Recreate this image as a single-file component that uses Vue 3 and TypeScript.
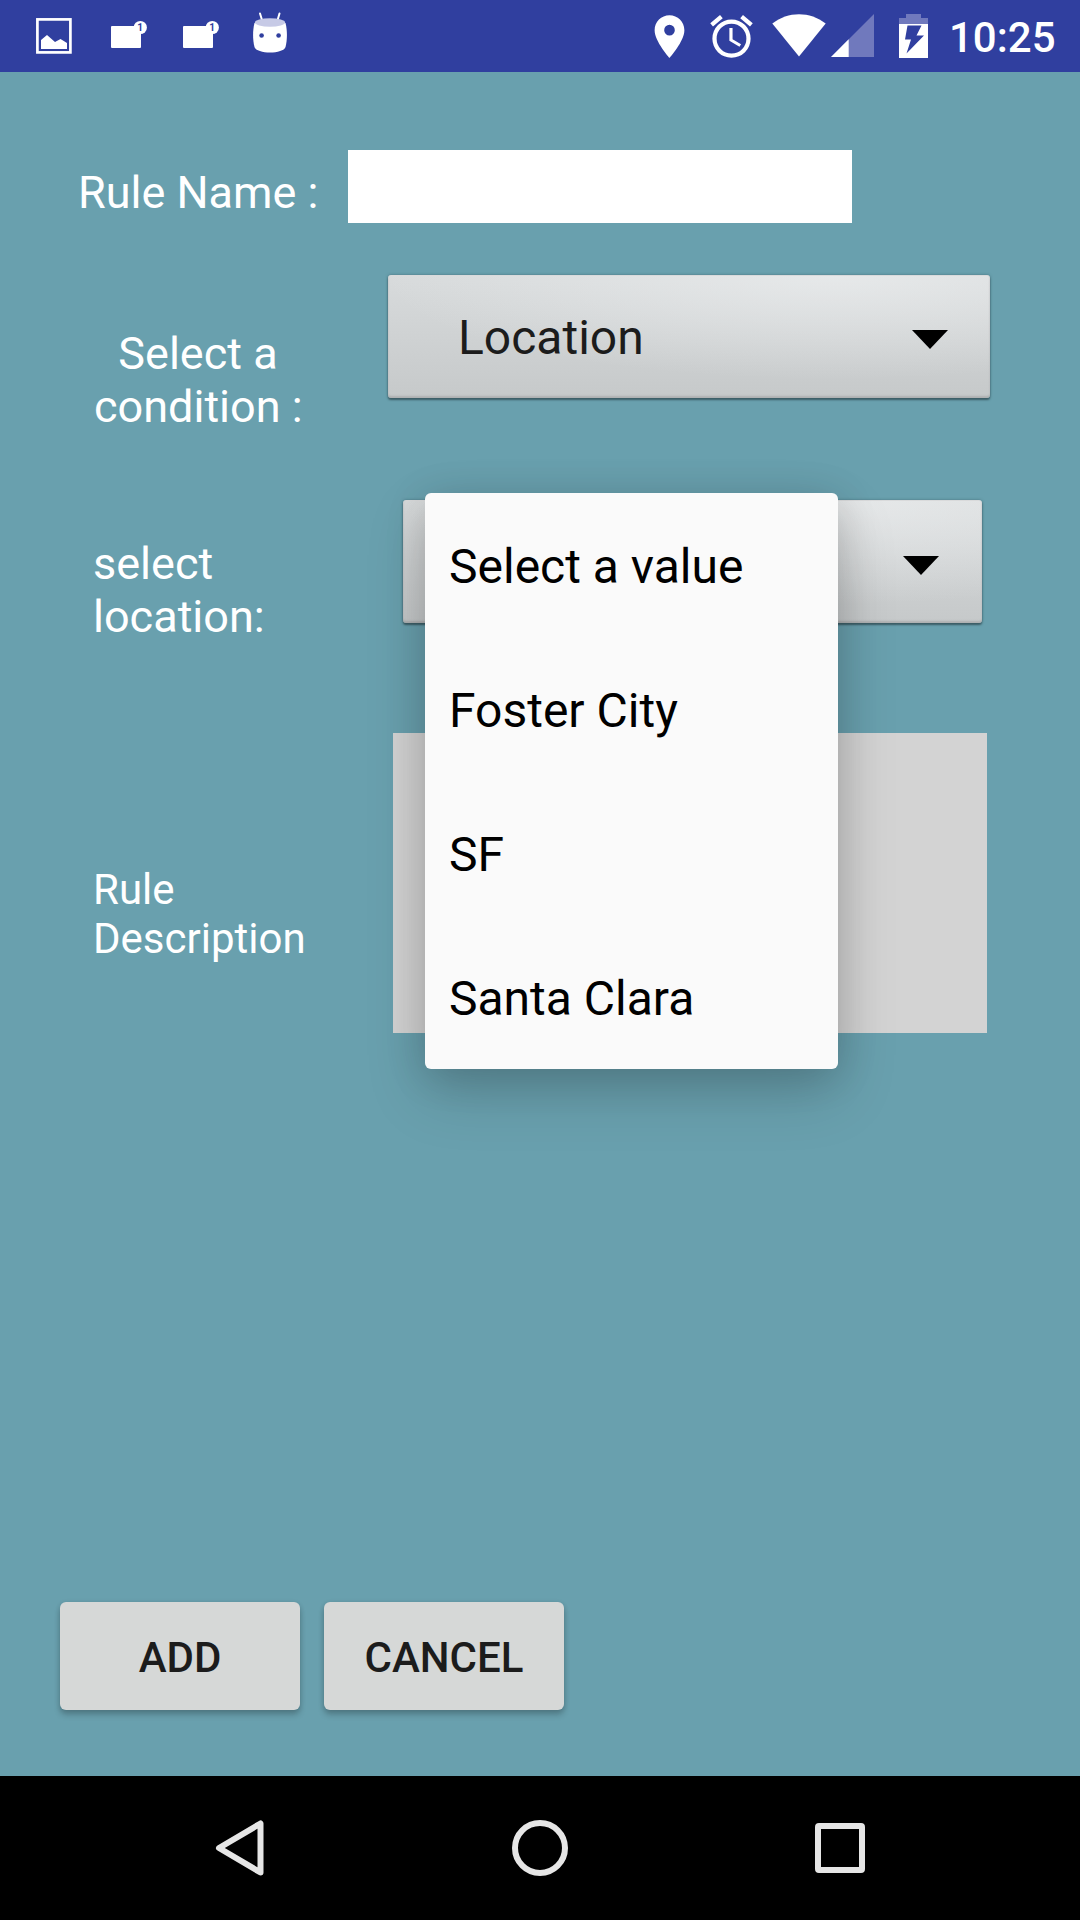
<script setup lang="ts">
const locations: string[] = ['Select a value', 'Foster City', 'SF', 'Santa Clara']
const mailIcons: number[] = [1, 2]
</script>

<template>
  <div class="screen">
    <header class="status">
      <div class="notifications">
        <svg class="icon-image" width="36" height="36" viewBox="0 0 36 36">
          <rect x="1.4" y="1.4" width="33" height="33" fill="none" stroke="#fff" stroke-width="2.7" />
          <path d="M5 22 L11 17 L19 24 L24.5 21 L31 25 V31 H5 Z" fill="#fff" />
        </svg>
        <svg v-for="n in mailIcons" :key="n" class="icon-mail" width="36" height="30" viewBox="0 0 36 30">
          <rect x="0" y="6" width="30" height="22" rx="1" fill="#fff" />
          <circle cx="29.3" cy="7.5" r="6.6" fill="#fff" />
          <text x="29" y="11" text-anchor="middle" class="badge">1</text>
        </svg>
        <svg class="icon-droid" width="36" height="42" viewBox="0 0 36 42">
          <path d="M8 1.500L10.300 9M27.500 1.500L25.300 9" stroke="#fff" stroke-width="2" stroke-linecap="round" />
          <path d="M2.500 11C0.600 18 0.600 28 2.500 35C4.500 42.300 31.500 42.300 33.500 35C35.400 28 35.400 18 33.500 11Z" fill="#fff" />
          <ellipse cx="18" cy="10.500" rx="15.200" ry="4.200" fill="#c7cae6" />
          <circle cx="9.600" cy="23.500" r="2.300" fill="#303f9f" />
          <circle cx="26.600" cy="23.500" r="2.300" fill="#303f9f" />
        </svg>
      </div>
      <div class="system">
        <svg class="icon-pin" width="51" height="51" viewBox="0 0 24 24">
          <path fill="#fff" d="M12 2C8.130 2 5 5.130 5 9c0 5.250 7 13 7 13s7-7.750 7-13c0-3.870-3.130-7-7-7zm0 9.500a2.500 2.500 0 1 1 0-5 2.500 2.500 0 0 1 0 5z" />
        </svg>
        <svg class="icon-alarm" width="51" height="51" viewBox="0 0 24 24">
          <path fill="#fff" d="M22 5.720l-4.600-3.860-1.290 1.530 4.600 3.860L22 5.720zM7.880 3.390L6.600 1.860 2 5.710l1.290 1.530 4.590-3.850zM12.500 8H11v6l4.750 2.850.750-1.230-4-2.370V8zM12 4a9 9 0 1 0 0 18 9 9 0 0 0 0-18zm0 16a7 7 0 1 1 0-14 7 7 0 0 1 0 14z" />
        </svg>
        <svg class="icon-wifi" width="54" height="43" viewBox="0 0 54 43">
          <path fill="#fff" d="M0.300 9.500C16 -3 38 -3 53.700 9.500L27 42.500Z" />
        </svg>
        <svg class="icon-signal" width="43" height="43" viewBox="0 0 43 43">
          <path fill="#7079bd" d="M43 0V43H0Z" />
          <path fill="#fff" d="M17.700 25.300V43H0Z" />
        </svg>
        <svg class="icon-battery" width="29" height="44" viewBox="0 0 29 44">
          <path fill="#7079bd" d="M7 0H22V4H29V10H0V4H7Z" />
          <path fill="#fff" d="M0 10H29V44H0Z" />
          <path fill="#303f9f" d="M8.500 11.500H22.500L17.500 21.500H25L7.500 39.500L12 25.500H6Z" />
        </svg>
        <span class="clock">10:25</span>
      </div>
    </header>

    <main class="form">
      <div class="row name-row">
        <label class="label name-label">Rule Name :</label>
        <div class="name-input"></div>
      </div>

      <div class="row condition-row">
        <label class="label condition-label">Select a<br />condition :</label>
        <div class="spinner condition-spinner">
          <span>Location</span>
          <svg width="38" height="21" viewBox="0 0 38 21"><path d="M1 1H37L19 20Z" /></svg>
        </div>
      </div>

      <div class="row location-row">
        <label class="label location-label">select<br />location:</label>
        <div class="spinner location-spinner">
          <svg width="38" height="21" viewBox="0 0 38 21"><path d="M1 1H37L19 20Z" /></svg>
        </div>
        <ul class="popup">
          <li v-for="item in locations" :key="item">{{ item }}</li>
        </ul>
      </div>

      <div class="row description-row">
        <label class="label description-label">Rule<br />Description</label>
        <div class="description"></div>
      </div>

      <div class="actions">
        <button type="button">ADD</button>
        <button type="button">CANCEL</button>
      </div>
    </main>

    <nav class="navbar">
      <svg width="52" height="60" viewBox="0 0 52 60">
        <path d="M47.500 5.500V54.500L6 30Z" fill="none" stroke="#e6e6e6" stroke-width="6" stroke-linejoin="round" />
      </svg>
      <svg width="56" height="56" viewBox="0 0 56 56">
        <circle cx="28" cy="28" r="25" fill="none" stroke="#e6e6e6" stroke-width="6" />
      </svg>
      <svg width="50" height="50" viewBox="0 0 50 50">
        <rect x="3" y="3" width="44" height="44" rx="1" fill="none" stroke="#e6e6e6" stroke-width="6" stroke-linejoin="round" />
      </svg>
    </nav>
  </div>
</template>

<style>
body {
  margin: 0;
}
</style>

<style scoped>
.screen {
  width: 1080px;
  height: 1920px;
  display: flex;
  flex-direction: column;
  overflow: hidden;
  background: #69a0ae;
  font-family: Roboto, sans-serif;
}
svg {
  display: block;
  flex: none;
}
.status {
  height: 72px;
  flex: none;
  display: flex;
  justify-content: space-between;
  background: #303f9f;
}
.notifications,
.system {
  display: flex;
  align-items: flex-start;
}
.icon-image {
  margin: 18px 39px 0 36px;
}
.icon-mail {
  margin: 20px 36px 0 0;
}
.badge {
  font: 700 10px Roboto, sans-serif;
  fill: #303f9f;
}
.icon-droid {
  margin: 12px 0 0 -3px;
}
.icon-pin {
  margin-top: 11px;
}
.icon-alarm {
  margin: 11px 0 0 11px;
}
.icon-wifi {
  margin: 14px 0 0 15px;
}
.icon-signal {
  margin: 14px 0 0 5px;
}
.icon-battery {
  margin: 14px 0 0 25px;
}
.clock {
  width: 104px;
  margin: 13px 27px 0 21px;
  font-size: 42px;
  line-height: 50px;
  font-weight: 500;
  color: #fff;
  white-space: nowrap;
}
.form {
  flex: 1;
  display: flex;
  flex-direction: column;
  padding-top: 78px;
}
.row {
  display: flex;
  align-items: flex-start;
  position: relative;
}
.label {
  flex: none;
  box-sizing: border-box;
  color: #fff;
  font-size: 45px;
  line-height: 53px;
  white-space: nowrap;
}
.name-row {
  height: 73px;
  margin-bottom: 52px;
}
.name-label {
  width: 348px;
  padding: 16px 0 0 78px;
}
.name-input {
  width: 504px;
  height: 73px;
  background: #fff;
}
.condition-row {
  height: 173px;
  margin-bottom: 52px;
}
.condition-label {
  width: 208px;
  margin: 52px 86px 0 94px;
  text-align: center;
}
.spinner {
  box-sizing: border-box;
  height: 123px;
  display: flex;
  align-items: center;
  border-radius: 3px;
  font-size: 48px;
  color: #1c1c1c;
  background:
    radial-gradient(ellipse 75% 85% at 74% 0, rgba(238, 240, 241, 0.65), rgba(238, 240, 241, 0)),
    linear-gradient(#d8dbdc, #c6c9ca);
  box-shadow:
    inset 0 1px 0 #d9dadb,
    inset 0 -2px 2px #aeb0b1,
    0 2px 2px #3c5d66,
    0 0 3px #47727d;
}
.spinner svg {
  margin-left: auto;
}
.condition-spinner {
  width: 602px;
  padding: 2px 41px 0 70px;
}
.condition-spinner svg {
  position: relative;
  top: 2px;
}
.location-row {
  height: 181px;
  margin-bottom: 52px;
}
.location-label {
  width: 310px;
  margin: 37px 0 0 93px;
}
.location-spinner {
  width: 579px;
  padding: 7px 42px 0 0;
}
.popup {
  position: absolute;
  z-index: 2;
  left: 425px;
  top: -7px;
  width: 413px;
  margin: 0;
  padding: 0;
  list-style: none;
  border-radius: 6px;
  background: #fafafa;
  box-shadow:
    0 24px 60px rgba(0, 0, 0, 0.17),
    0 6px 42px rgba(0, 0, 0, 0.14);
}
.popup li {
  height: 144px;
  line-height: 148px;
  padding-left: 24px;
  font-size: 48px;
  color: #000;
}
.description-row {
  height: 300px;
}
.description-label {
  width: 300px;
  margin: 132px 0 0 93px;
  font-size: 42px;
  line-height: 49px;
}
.description {
  width: 594px;
  height: 300px;
  background: #d3d3d3;
}
.actions {
  display: flex;
  gap: 24px;
  margin: auto 0 66px 60px;
}
.actions button {
  width: 240px;
  height: 108px;
  padding: 2px 0 0;
  border: 0;
  border-radius: 6px;
  background: #d6d8d7;
  color: #1c1c1c;
  font: 500 42px Roboto, sans-serif;
  box-shadow:
    0 5px 6px rgba(0, 0, 0, 0.2),
    0 1px 5px rgba(0, 0, 0, 0.12);
}
.navbar {
  height: 144px;
  flex: none;
  display: flex;
  align-items: center;
  justify-content: space-between;
  box-sizing: border-box;
  padding: 0 215px 0 213px;
  background: #000;
}
</style>
